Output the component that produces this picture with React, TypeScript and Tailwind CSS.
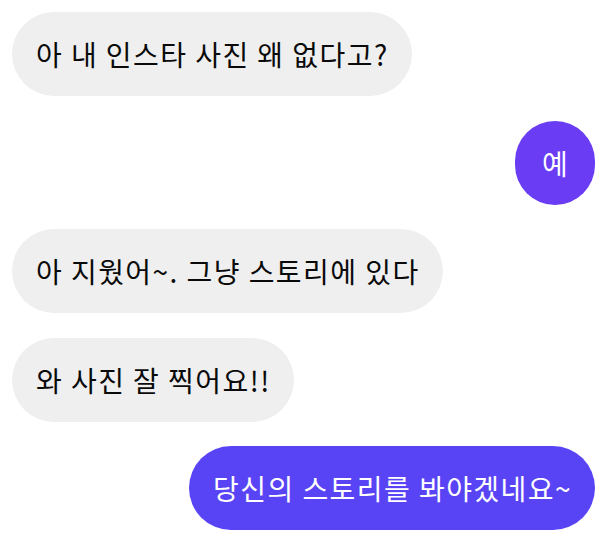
import React from "react";

const font = { fontFamily: '"Noto Sans CJK KR", "Noto Sans", sans-serif' };

function Bubble({ text, mine, color, round }: { text: string; mine?: boolean; color?: string; round?: boolean }) {
  return (
    <div className={mine ? "flex justify-end" : "flex justify-start"}>
      <div
        className={
          "h-[84px] rounded-full flex items-center text-[28px] leading-none whitespace-nowrap " +
          (round ? "w-[80px] justify-center " : "pl-6 pr-[23px] tracking-[1.45px] ") +
          (mine ? "text-white " : "bg-[#efefef] text-[#0a0a0a] ") +
          (color ?? "")
        }
      >
        {text}
      </div>
    </div>
  );
}

export default function App() {
  return (
    <div className="w-[600px] h-[549px] bg-white overflow-hidden" style={font}>
      <div className="flex flex-col gap-[24.5px] pt-[12px] pl-[12px] pr-[5px]">
        <Bubble text="아 내 인스타 사진 왜 없다고?" />
        <Bubble text="예" mine round color="bg-[#6a3cf4]" />
        <Bubble text="아 지웠어~. 그냥 스토리에 있다" />
        <Bubble text="와 사진 잘 찍어요!!" />
        <Bubble text="당신의 스토리를 봐야겠네요~" mine color="bg-[#5944f5]" />
      </div>
    </div>
  );
}
